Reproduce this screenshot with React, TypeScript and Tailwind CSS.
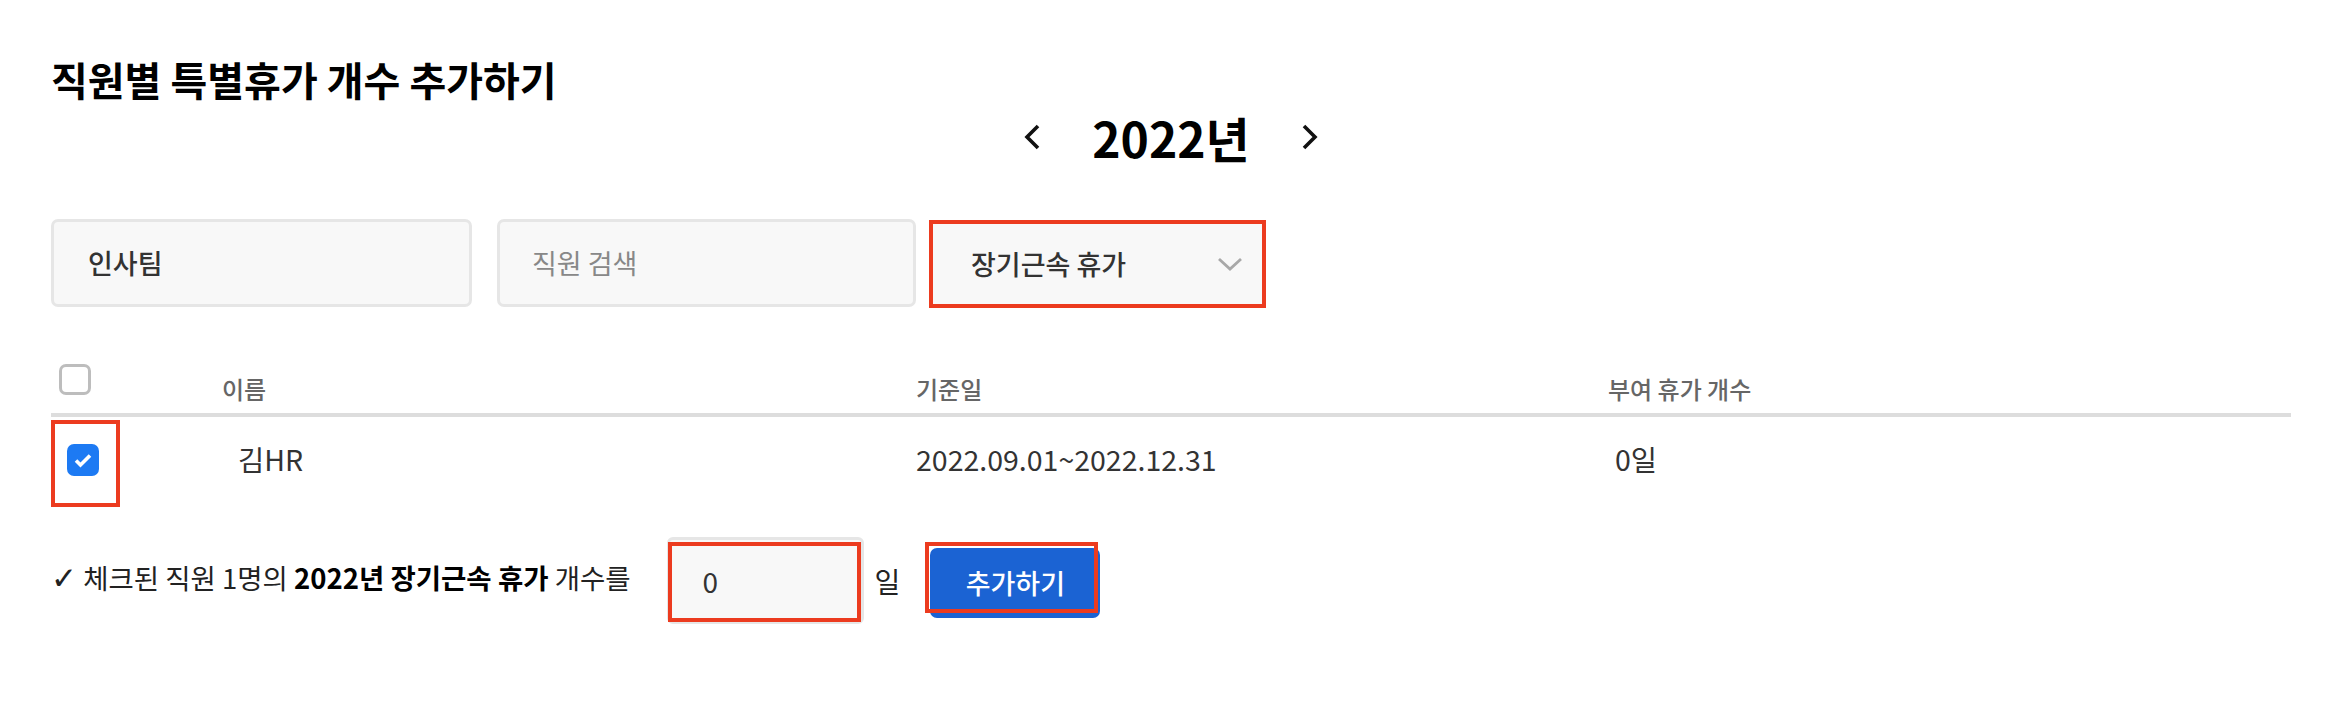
import React from "react";

const RED = "border-[#ec3b1f]";

function Chevron({ dir }: { dir: "left" | "right" }) {
  return (
    <svg width="16" height="26" viewBox="0 0 16 26" className="shrink-0">
      <polyline
        points={dir === "left" ? "14,2 3,13 14,24" : "2,2 13,13 2,24"}
        fill="none"
        stroke="#111"
        strokeWidth="3.6"
      />
    </svg>
  );
}

export default function App() {
  return (
    <div className="w-[2328px] h-[720px] bg-white text-[#333] font-['Noto_Sans_CJK_KR','Noto_Sans',sans-serif] overflow-hidden">
      <div className="pl-[51px] pr-[37px] pt-[59px]">
        <h1 className="text-[40px] font-bold leading-none text-black">직원별 특별휴가 개수 추가하기</h1>

        <div className="flex items-center justify-center h-[50px] mt-[13px]">
          <Chevron dir="left" />
          <div className="mx-[52px] text-[48px] font-bold leading-none text-black">2022년</div>
          <Chevron dir="right" />
        </div>

        <div className="flex mt-[57px]">
          <div className="w-[421px] h-[88px] border-[3px] border-[#e6e6e6] rounded-[7px] bg-[#f8f8f8] flex items-center pl-[34px] text-[27px] font-medium text-[#333]">
            인사팀
          </div>
          <div className="ml-[25px] w-[419px] h-[88px] border-[3px] border-[#e6e6e6] rounded-[7px] bg-[#f8f8f8] flex items-center pl-[32px] text-[27px] text-[#888]">
            직원 검색
          </div>
          <div className="relative ml-[13px] w-[337px] h-[88px] mt-[1px]">
            <div className="w-full h-full border-[3px] border-[#e6e6e6] rounded-[7px] bg-[#f8f8f8] flex items-center justify-between pl-[39px] pr-[20px] text-[27px] font-medium text-[#333]">
              <span>장기근속 휴가</span>
              <svg width="26" height="15" viewBox="0 0 26 15">
                <polyline points="2,2 13,12 24,2" fill="none" stroke="#a8a8a8" strokeWidth="2.8" />
              </svg>
            </div>
            <div className={`absolute inset-0 border-4 ${RED}`} />
          </div>
        </div>

        <div className="flex h-[49px] mt-[56px] text-[24px] font-medium text-[#666] leading-none">
          <div className="w-[171px]">
            <div className="ml-[8px] w-[32px] h-[31px] border-[3px] border-[#bdbdbd] rounded-[7px] bg-white" />
          </div>
          <div className="w-[694px] pt-[13px]">이름</div>
          <div className="w-[692px] pt-[13px]">기준일</div>
          <div className="pt-[13px]">부여 휴가 개수</div>
        </div>
        <div className="h-[4px] bg-[#dddddd]" />

        <div className="flex h-[87px] mt-[3px] text-[28.5px] text-[#333] leading-none">
          <div className="w-[171px]">
            <div className={`w-[69px] h-[87px] border-4 ${RED} pl-[12px] pt-[20px]`}>
              <div className="w-[32px] h-[32px] rounded-[7px] bg-[#1d7af3] flex items-center justify-center">
                <svg width="32" height="32" viewBox="0 0 32 32">
                  <polyline points="9,16.5 13.5,21 23,11.5" fill="none" stroke="#fff" strokeWidth="3.6" />
                </svg>
              </div>
            </div>
          </div>
          <div className="w-[694px] pt-[25px] pl-[16px]">김HR</div>
          <div className="w-[692px] pt-[25px]">2022.09.01~2022.12.31</div>
          <div className="pt-[25px] pl-[7px]">0일</div>
        </div>

        <div className="flex items-center h-[87px] mt-[30px] text-[27.5px] text-[#222]">
          <div className="leading-none -mt-[4px]">
            <span className="font-['DejaVu_Sans',sans-serif] text-[31px]">✓</span> 체크된 직원 1명의 <span className="font-bold text-black">2022년 장기근속 휴가</span> 개수를
          </div>
          <div className="relative ml-[36px] w-[197px] h-[87px] border-[3px] border-[#e6e6e6] rounded-[6px] bg-[#f8f8f8] flex items-center pl-[33px] text-[28px] text-[#333]">
            0
            <div className={`absolute left-[-2px] right-[0px] top-[2px] bottom-[-1px] border-4 ${RED}`} />
          </div>
          <div className="ml-[11px] text-[28px] text-[#222]">일</div>
          <div className="relative ml-[30px] mt-[5px]">
            <div className="w-[170px] h-[70px] rounded-[7px] bg-[#1b63d3] flex items-center justify-center text-[27px] font-medium text-white">
              추가하기
            </div>
            <div className={`absolute left-[-5px] right-[2px] top-[-6px] bottom-[5px] border-4 ${RED}`} />
          </div>
        </div>
      </div>
    </div>
  );
}
